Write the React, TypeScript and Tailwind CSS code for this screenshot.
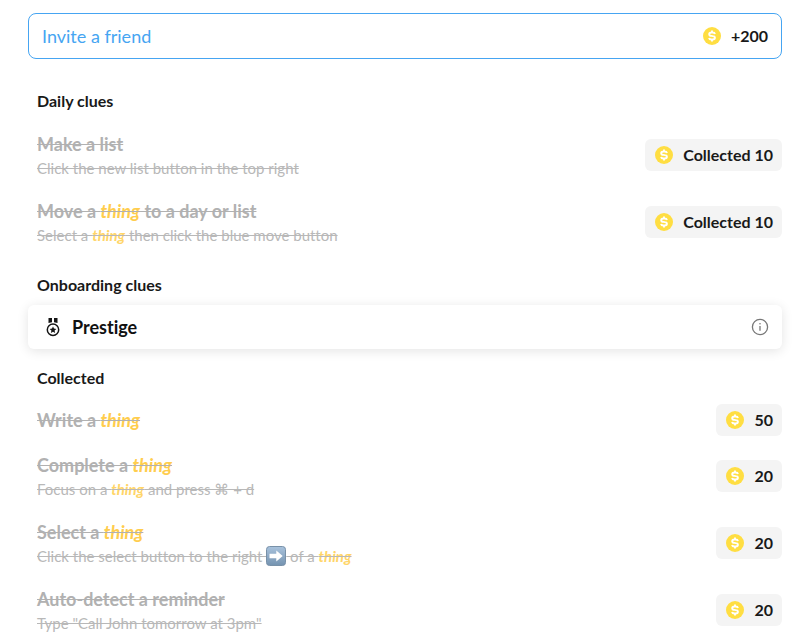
import React from 'react';

interface Clue {
  title: React.ReactNode;
  hint?: React.ReactNode;
  reward: string;
}

const Thing: React.FC = () => (
  <em className="font-bold text-[#ffcd4d]">thing</em>
);

const CoinIcon: React.FC = () => (
  <svg className="size-[18px] shrink-0" viewBox="0 0 18 18" fill="none" aria-hidden="true">
    <circle cx="9" cy="9" r="9" fill="#ffde42" />
    <path
      d="M9 3.4v2M9 12.6v2M12 7c-.3-1-1.1-1.5-2.2-1.5H8.4c-1.3 0-2.2.7-2.2 1.7s.8 1.6 2 1.7l1.6.2c1.3.1 2.1.7 2.1 1.7s-.9 1.7-2.2 1.7H8.3c-1.2 0-2-.5-2.3-1.5"
      stroke="#fff"
      strokeWidth="1.9"
    />
  </svg>
);

const MedalIcon: React.FC = () => (
  <svg className="h-5 w-[14px] shrink-0" viewBox="0 0 14 20" fill="none" aria-hidden="true">
    <path d="M2.5 1H6v4.2l-3.5.9zM8 1h3.5v5.1L8 5.2z" fill="#151515" />
    <circle cx="7" cy="12.8" r="5.7" stroke="#151515" strokeWidth="1.5" />
    <path
      d="m7 9.4 1 2.2 2.4.3-1.8 1.6.5 2.4L7 14.7l-2.1 1.2.5-2.4-1.8-1.6 2.4-.3z"
      fill="#151515"
    />
  </svg>
);

const InfoIcon: React.FC = () => (
  <svg className="size-[18px]" viewBox="0 0 18 18" fill="none" aria-hidden="true">
    <circle cx="9" cy="9" r="7.6" stroke="#777" strokeWidth="1.3" />
    <path d="M9 8v4.8" stroke="#777" strokeWidth="1.3" />
    <circle cx="9" cy="5.8" r=".8" fill="#777" />
  </svg>
);

const ArrowIcon: React.FC = () => (
  <svg
    className="inline-block size-5 align-[-4px]"
    viewBox="0 0 20 20"
    role="img"
    aria-label="right arrow"
  >
    <defs>
      <linearGradient id="arrow-fill" x1="0" y1="0" x2="0" y2="1">
        <stop offset="0" stopColor="#a9c3dd" />
        <stop offset="1" stopColor="#7493b0" />
      </linearGradient>
    </defs>
    <rect x=".5" y=".5" width="19" height="19" rx="3" fill="url(#arrow-fill)" stroke="#7891a8" />
    <path d="M3.5 7.8h6.8V4.4l6.4 5.6-6.4 5.6v-3.4H3.5z" fill="#fff" />
  </svg>
);

const dailyClues: Clue[] = [
  {
    title: 'Make a list',
    hint: 'Click the new list button in the top right',
    reward: 'Collected 10',
  },
  {
    title: <>Move a <Thing /> to a day or list</>,
    hint: <>Select a <Thing /> then click the blue move button</>,
    reward: 'Collected 10',
  },
];

const collectedClues: Clue[] = [
  { title: <>Write a <Thing /></>, reward: '50' },
  {
    title: <>Complete a <Thing /></>,
    hint: <>Focus on a <Thing /> and press ⌘ + d</>,
    reward: '20',
  },
  {
    title: <>Select a <Thing /></>,
    hint: <>Click the select button to the right <ArrowIcon /> of a <Thing /></>,
    reward: '20',
  },
  {
    title: 'Auto-detect a reminder',
    hint: 'Type "Call John tomorrow at 3pm"',
    reward: '20',
  },
];

const ClueList: React.FC<{ clues: Clue[] }> = ({ clues }) => (
  <ul className="flex flex-col gap-3">
    {clues.map((clue, index) => (
      <li key={index} className="flex items-center justify-between gap-4 pl-[9px]">
        <div className="pt-[3px] pb-0.5">
          <h3 className="text-lg leading-7 font-bold text-[#b1b1b1] line-through">{clue.title}</h3>
          {clue.hint && (
            <p className="pb-0.5 text-[15px] leading-5 text-[#b8b8b8] line-through [&_em]:text-[#ffd568]">
              {clue.hint}
            </p>
          )}
        </div>
        <div className="flex h-8 shrink-0 items-center gap-[10px] rounded-md bg-[#f4f4f4] pr-[9px] pl-[10px] text-base font-bold">
          <CoinIcon />
          {clue.reward}
        </div>
      </li>
    ))}
  </ul>
);

export default function App() {
  return (
    <main className="bg-white pt-[13px] pr-[18px] pl-7 font-['Lato',sans-serif] text-[#191919] [font-variant-ligatures:none]">
      <button
        type="button"
        className="flex h-[46px] w-full items-center justify-between rounded-lg border border-[#46a5f2] px-[13px]"
      >
        <span className="text-lg text-[#46a5f2]">Invite a friend</span>
        <span className="flex items-center gap-[10px] text-base font-bold">
          <CoinIcon />
          +200
        </span>
      </button>

      <section>
        <h2 className="mt-[30px] mb-[14px] pl-[9px] text-base leading-6 font-bold">Daily clues</h2>
        <ClueList clues={dailyClues} />
      </section>

      <section>
        <h2 className="mt-6 mb-2 pl-[9px] text-base leading-6 font-bold">Onboarding clues</h2>
        <div className="flex h-11 items-center justify-between rounded-md bg-white pr-[13px] pl-[18px] shadow-[0_2px_12px_rgba(0,0,0,0.11)]">
          <div className="flex items-center gap-3 text-lg font-bold text-[#111]">
            <MedalIcon />
            Prestige
          </div>
          <button type="button" aria-label="About Prestige">
            <InfoIcon />
          </button>
        </div>
      </section>

      <section>
        <h2 className="mt-[17px] mb-[13px] pl-[9px] text-base leading-6 font-bold">Collected</h2>
        <ClueList clues={collectedClues} />
      </section>
    </main>
  );
}
